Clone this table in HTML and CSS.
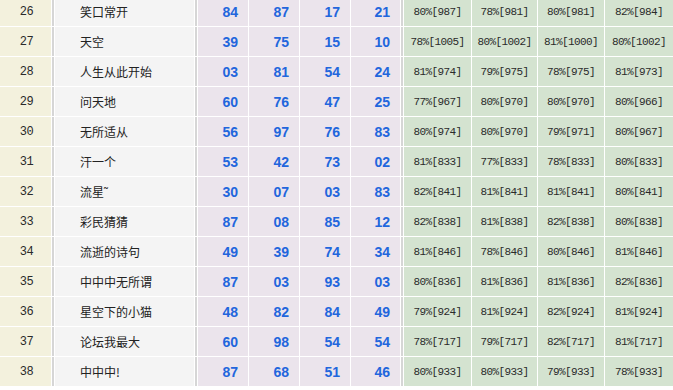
FILE: index.html
```html
<!DOCTYPE html>
<html lang="zh">
<head>
<meta charset="utf-8">
<title>统计表</title>
<link rel="stylesheet" href="styles.css">
</head>
<body>
<table class="grid">
<colgroup>
<col class="c-no"><col class="c-sep"><col class="c-name"><col class="c-sep">
<col class="c-n"><col class="c-n"><col class="c-n"><col class="c-n4"><col class="c-sep">
<col class="c-g1"><col class="c-g2"><col class="c-g3"><col class="c-g4">
</colgroup>
<tbody>
<tr><td class="no">26</td><td class="sep"></td><td class="name">笑口常开</td><td class="sep"></td><td class="num">84</td><td class="num">87</td><td class="num">17</td><td class="num">21</td><td class="sep"></td><td class="pct">80%[987]</td><td class="pct">78%[981]</td><td class="pct">80%[981]</td><td class="pct">82%[984]</td></tr>
<tr><td class="no">27</td><td class="sep"></td><td class="name">天空</td><td class="sep"></td><td class="num">39</td><td class="num">75</td><td class="num">15</td><td class="num">10</td><td class="sep"></td><td class="pct">78%[1005]</td><td class="pct">80%[1002]</td><td class="pct">81%[1000]</td><td class="pct">80%[1002]</td></tr>
<tr><td class="no">28</td><td class="sep"></td><td class="name">人生从此开始</td><td class="sep"></td><td class="num">03</td><td class="num">81</td><td class="num">54</td><td class="num">24</td><td class="sep"></td><td class="pct">81%[974]</td><td class="pct">79%[975]</td><td class="pct">78%[975]</td><td class="pct">81%[973]</td></tr>
<tr><td class="no">29</td><td class="sep"></td><td class="name">问天地</td><td class="sep"></td><td class="num">60</td><td class="num">76</td><td class="num">47</td><td class="num">25</td><td class="sep"></td><td class="pct">77%[967]</td><td class="pct">80%[970]</td><td class="pct">80%[970]</td><td class="pct">80%[966]</td></tr>
<tr><td class="no">30</td><td class="sep"></td><td class="name">无所适从</td><td class="sep"></td><td class="num">56</td><td class="num">97</td><td class="num">76</td><td class="num">83</td><td class="sep"></td><td class="pct">80%[974]</td><td class="pct">80%[970]</td><td class="pct">79%[971]</td><td class="pct">80%[967]</td></tr>
<tr><td class="no">31</td><td class="sep"></td><td class="name">汗一个</td><td class="sep"></td><td class="num">53</td><td class="num">42</td><td class="num">73</td><td class="num">02</td><td class="sep"></td><td class="pct">81%[833]</td><td class="pct">77%[833]</td><td class="pct">78%[833]</td><td class="pct">80%[833]</td></tr>
<tr><td class="no">32</td><td class="sep"></td><td class="name">流星˜</td><td class="sep"></td><td class="num">30</td><td class="num">07</td><td class="num">03</td><td class="num">83</td><td class="sep"></td><td class="pct">82%[841]</td><td class="pct">81%[841]</td><td class="pct">81%[841]</td><td class="pct">80%[841]</td></tr>
<tr><td class="no">33</td><td class="sep"></td><td class="name">彩民猜猜</td><td class="sep"></td><td class="num">87</td><td class="num">08</td><td class="num">85</td><td class="num">12</td><td class="sep"></td><td class="pct">82%[838]</td><td class="pct">81%[838]</td><td class="pct">82%[838]</td><td class="pct">80%[838]</td></tr>
<tr><td class="no">34</td><td class="sep"></td><td class="name">流逝的诗句</td><td class="sep"></td><td class="num">49</td><td class="num">39</td><td class="num">74</td><td class="num">34</td><td class="sep"></td><td class="pct">81%[846]</td><td class="pct">78%[846]</td><td class="pct">80%[846]</td><td class="pct">81%[846]</td></tr>
<tr><td class="no">35</td><td class="sep"></td><td class="name">中中中无所谓</td><td class="sep"></td><td class="num">87</td><td class="num">03</td><td class="num">93</td><td class="num">03</td><td class="sep"></td><td class="pct">80%[836]</td><td class="pct">81%[836]</td><td class="pct">81%[836]</td><td class="pct">82%[836]</td></tr>
<tr><td class="no">36</td><td class="sep"></td><td class="name">星空下的小猫</td><td class="sep"></td><td class="num">48</td><td class="num">82</td><td class="num">84</td><td class="num">49</td><td class="sep"></td><td class="pct">79%[924]</td><td class="pct">81%[924]</td><td class="pct">82%[924]</td><td class="pct">81%[924]</td></tr>
<tr><td class="no">37</td><td class="sep"></td><td class="name">论坛我最大</td><td class="sep"></td><td class="num">60</td><td class="num">98</td><td class="num">54</td><td class="num">54</td><td class="sep"></td><td class="pct">78%[717]</td><td class="pct">79%[717]</td><td class="pct">82%[717]</td><td class="pct">81%[717]</td></tr>
<tr><td class="no">38</td><td class="sep"></td><td class="name">中中中!</td><td class="sep"></td><td class="num">87</td><td class="num">68</td><td class="num">51</td><td class="num">46</td><td class="sep"></td><td class="pct">80%[933]</td><td class="pct">80%[933]</td><td class="pct">79%[933]</td><td class="pct">78%[933]</td></tr>
</tbody>
</table>
</body>
</html>
```
FILE: styles.css
```css
html, body {
  margin: 0;
  padding: 0;
  background: #ffffff;
  overflow: hidden;
}

.grid {
  table-layout: fixed;
  width: 675px;
  margin: -4px 0 0 -1px;
  border-collapse: separate;
  border-spacing: 1px;
  background: #ffffff;
  font-family: "Liberation Mono", "Noto Sans CJK SC", monospace;
  font-size: 11px;
  color: #2a2a2a;
}

.c-no { width: 51px; }
.c-sep { width: 2px; }
.c-name { width: 139px; }
.c-n { width: 50px; }
.c-n4 { width: 49px; }
.c-g1 { width: 67px; }
.c-g2 { width: 65px; }
.c-g3 { width: 66px; }
.c-g4 { width: 68px; }

.grid td {
  height: 29px;
  padding: 0;
  white-space: nowrap;
  overflow: hidden;
  vertical-align: middle;
}

.no {
  background: #f3f1dd;
  text-align: center;
  font-size: 12px;
  letter-spacing: -0.4px;
  padding-left: 2px !important;
}

.sep {
  background: #d6d6d6;
}

.name {
  background: #f4f4f4;
  padding-left: 25px !important;
  font-family: "Noto Sans CJK SC", sans-serif;
  font-size: 12px;
  color: #222222;
}

.num {
  background: #ebe4ec;
  text-align: right;
  padding-right: 10px !important;
  font-family: "Liberation Sans", Arial, sans-serif;
  font-weight: bold;
  font-size: 14px;
  color: #2266dd;
}

.pct {
  background: #d4e3d0;
  text-align: center;
  letter-spacing: -0.6px;
}
```
